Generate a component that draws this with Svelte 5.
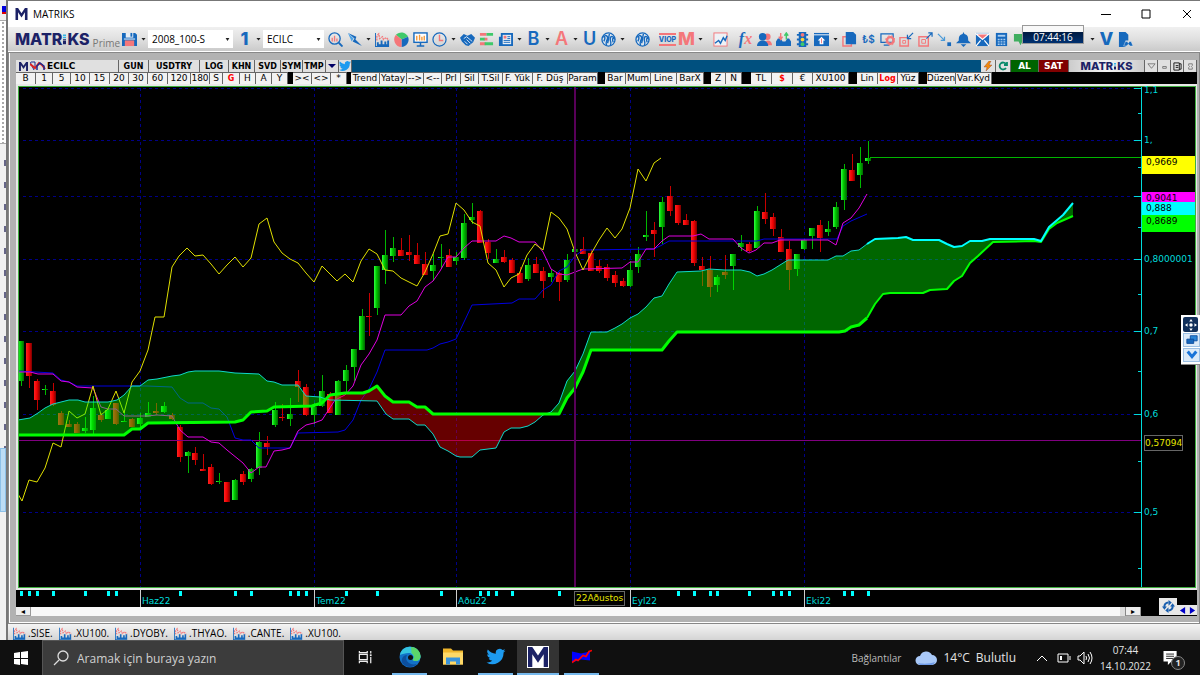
<script lang="ts">
   type Tool = { id: string; text?: string; color?: string; caret?: boolean; gap?: boolean };

   const B = "#1769bd";
   const R = "#f4777a";

   const icons: Record<string, string> = {
      save: `<path d="M0 1h14l2 2v12H0z" fill="${B}"/><path d="M4 1h8v5H4z" fill="#e8eef5"/><path d="M9 1h2v4H9z" fill="${B}"/><path d="M3 9h10v6H3z" fill="${R}"/><path d="M2 7h12v1H2z" fill="#fff"/>`,
      lens: `<circle cx="7" cy="7" r="6" fill="none" stroke="${B}" stroke-width="1.400"/><path d="M11.500 11.500l4 4" stroke="${B}" stroke-width="2"/><path d="M4.500 6v4M7 4v6M9.500 7v3" stroke="${R}" stroke-width="1.400"/>`,
      bolt: `<path d="M1 1l9 4-1 3 7 7-10-5 2-3z" fill="${B}"/><path d="M1 1l6 6-2 3z" fill="#4aa3e8"/>`,
      bars: `<path d="M2 9V4l2-2 1 5 3-2 1 3 3-2 3 3" stroke="${R}" fill="none" stroke-width="1.400" stroke-dasharray="2 1"/><path d="M0 1h1v14h14v1H0z" fill="${B}"/><path d="M2 15v-4h2v2h2V9h2v4h2v-3h2v3h1v-4h2v6z" fill="${B}"/>`,
      pie: `<path d="M8 8L2 3a8 8 0 0 1 13 2z" fill="#3fc96a"/><path d="M8 8L15 5a8 8 0 0 1-7 11z" fill="${B}"/><path d="M8 8v8A8 8 0 0 1 2 3z" fill="${R}"/>`,
      board: `<rect x="1" y="1" width="14" height="10" fill="#fff" stroke="${B}" stroke-width="1.500"/><path d="M4 9V4M7 9V3M9.500 9V5M12 9V4" stroke="#f59a3c" stroke-width="1.500"/><path d="M8 11v3M4 15h8" stroke="${B}" stroke-width="1.600"/>`,
      clock: `<circle cx="8" cy="8" r="7" fill="none" stroke="${B}" stroke-width="1.300"/><path d="M8 3v6h4" stroke="${R}" fill="none" stroke-width="1.500"/>`,
      hands: `<path d="M0 6l4-4 4 2 4-2 4 4-2 5-5 4-3-1-4-4z" fill="${B}"/><path d="M4 7l3-2 6 5M5 10l3 3M7 8l4 4" stroke="#dce8f4" fill="none"/>`,
      list: `<path d="M1 1h7v3H1zM5 6h4v3H5zM1 11h6v3H1z" fill="${R}"/><path d="M8 1h7v3H8zM1 6h5v3H1zM6 11h9v3H6z" fill="#3fc96a"/>`,
      news: `<path d="M3 1h13v14H1V5h2z" fill="${B}"/><path d="M5 3h9v10H5z" fill="#e8eef5"/><path d="M6 4h3v3H6z" fill="${R}"/><path d="M10 5h3M10 7h3M6 9h7M6 11h7" stroke="${B}"/>`,
      badge: `<circle cx="8" cy="8" r="7" fill="#dfe7ef" stroke="${B}" stroke-width="1.400"/><path d="M6 14c-2-3 1-5 1-8 0-2-2-3-4-1 2 0 1 3 0 5M10 14c2-3-1-4 0-7 0-3 3-3 4 0-2-1-2 1-1 4M9 2c-1 4-1 7-2 10" stroke="${B}" stroke-width="1.500" fill="none"/>`,
      line: `<rect x="1" y="1" width="14" height="14" fill="#eef2f6" stroke="${R}"/><path d="M2 12l4-3 2 3 3-6 2 3 2-5" stroke="${B}" fill="none" stroke-width="1.500"/>`,
      people: `<circle cx="11" cy="5" r="3.500" fill="${R}"/><path d="M8 14c0-7 8-6 8 0z" fill="${R}"/><circle cx="6" cy="5" r="4" fill="${B}"/><path d="M0 15c0-8 12-8 12 0z" fill="${B}"/>`,
      inbox: `<path d="M0 10l2-3h3l2 3h3l2-3h2l2 3v5H0z" fill="${B}"/><path d="M5 1v6M3 5l2 3 2-3" stroke="${R}" stroke-width="1.500" fill="none"/><path d="M11 8V2M9 4l2-3 2 3" stroke="#3fc96a" stroke-width="1.500" fill="none"/>`,
      light: `<path d="M4 0h8v16H4zM2 2h12v2H2zM2 7h12v2H2zM2 12h12v2H2z" fill="${B}"/><circle cx="8" cy="3" r="2" fill="${R}"/><circle cx="8" cy="8" r="2" fill="#ffd23c"/><circle cx="8" cy="13" r="2" fill="#3fc96a"/>`,
      up: `<path d="M0 1h16v14H0z" fill="${B}"/><path d="M0 3h16" stroke="#fff"/><path d="M8 5l4 4h-2v4H6V9H4z" fill="#fff"/><path d="M8 7v5" stroke="${R}"/>`,
      copy: `<path d="M1 5h9v10H1z" fill="none" stroke="${R}" stroke-width="1.500"/><path d="M4 0h8l3 3v10H4z" fill="${B}"/>`,
      gear: `<path d="M1 2h13v9H1zM4 14h6" fill="none" stroke="${B}" stroke-width="1.300"/><circle cx="11" cy="9" r="3.500" fill="none" stroke="${R}" stroke-width="2.500"/><circle cx="11" cy="9" r="5" fill="none" stroke="${R}" stroke-dasharray="2 2"/>`,
      shrink: `<path d="M1 6h9v9H1z" fill="none" stroke="${R}" stroke-width="1.500"/><path d="M4 9h3v3H4z" fill="none" stroke="${R}"/><path d="M15 1l-5 5M9 3v4h4" stroke="${B}" fill="none" stroke-width="1.300"/>`,
      grow: `<path d="M1 5h10v10H1z" fill="none" stroke="${R}" stroke-width="1.500"/><path d="M4 8h4v4H4z" fill="none" stroke="${R}"/><path d="M9 7l6-6M11 1h4v4" stroke="${B}" fill="none" stroke-width="1.300"/>`,
      down: `<path d="M1 2l7 7M8 5v4H4" stroke="#4a9ad8" fill="none" stroke-width="1.300"/><path d="M11 11h4v4h-4z" fill="${B}"/>`,
      bell: `<path d="M8 0l1 2c4 1 4 4 4 7l3 3H0l3-3c0-3 0-6 4-7zM5 13h6l-3 3z" fill="${B}"/>`,
      mail: `<path d="M1 1h14v14H1z" fill="${B}"/><path d="M1 2l7 6 7-6zM1 15l5-6M15 15l-5-6" fill="${R}" stroke="#fff" stroke-width="1.300"/>`,
      calc: `<path d="M2 1h12v14H2z" fill="${B}"/><path d="M4 3h8v2H4z" fill="#a9cdf0"/><path d="M4 8h8M4 10.500h8M4 13h8" stroke="#a9cdf0" stroke-width="1.500" stroke-dasharray="2 1"/>`,
      chat: `<path d="M1 2h12v8h-3l-2 4-2-4H1z" fill="#3fae5f"/>`,
      find: `<path d="M1 0h7l3 3v6H8v7H1z" fill="${B}"/><path d="M6 15l2-5h2l1 2 1-2h2l2 5h-3l-2-2-2 2z" fill="${B}" stroke="#e8eef5" stroke-width=".5"/>`,
   };

   const tools: Tool[] = [
      { id: "lens" },
      { id: "bolt", caret: true },
      { id: "bars" },
      { id: "pie" },
      { id: "board" },
      { id: "clock", caret: true },
      { id: "hands" },
      { id: "list" },
      { id: "news", caret: true },
      { id: "bold", text: "B", color: B, caret: true },
      { id: "alpha", text: "A", color: R, caret: true },
      { id: "under", text: "U", color: B },
      { id: "badge", caret: true },
      { id: "badge", gap: true },
      { id: "viop", text: "VIOP", gap: true },
      { id: "mm", text: "M", color: R, caret: true },
      { id: "line", gap: true },
      { id: "fx", text: "fx", gap: true },
      { id: "people" },
      { id: "inbox" },
      { id: "light" },
      { id: "up", caret: true },
      { id: "copy" },
      { id: "lira", text: "₺$" },
      { id: "gear" },
      { id: "shrink" },
      { id: "grow" },
      { id: "down" },
      { id: "bell" },
      { id: "mail" },
      { id: "calc" },
      { id: "chat" },
   ];

   const heads: [string, number][] = [
      ["GUN", 30], ["USDTRY", 51], ["LOG", 29], ["KHN", 26], ["SVD", 26], ["SYM", 22], ["TMP", 23],
   ];

   // label and cell width, an empty label is a black spacer
   const cells: [string, number][] = [
      ["B", 20], ["1", 17], ["5", 18], ["10", 19], ["15", 20], ["20", 19], ["30", 19], ["60", 20],
      ["120", 23], ["180", 19], ["S", 13], ["G", 17], ["H", 16], ["A", 16], ["Y", 16], ["", 5],
      ["><", 19], ["<>", 19], ["*", 16], ["", 4], ["Trend", 29], ["Yatay", 27], ["-->", 17],
      ["<--", 18], ["Prl", 19], ["Sil", 18], ["T.Sil", 24], ["F. Yük", 30], ["F. Düş", 35],
      ["Param", 30], ["", 7], ["Bar", 21], ["Mum", 25], ["Line", 26], ["BarX", 27], ["", 7],
      ["Z", 15], ["N", 16], ["", 9], ["TL", 21], ["$", 21], ["€", 20], ["XU100", 36], ["", 8],
      ["Lin", 21], ["Log", 20], ["Yüz", 21], ["", 8], ["Düzen", 29], ["Var.Kyd", 36],
   ];
   const reds = ["G", "$", "Log"];

   const barX = (i: number) => 21.4 + i * 7.91;

   // body top, body bottom, high, low, r = falling
   const candles = `341 381 341 386 g|343 376 343 388 r|381 400 379 410 r|389 390 385 395 g|391 405 383 406 r
413 425 411 425 r|424 427 420 427 r|424 433 422 433 r|428 431 417 433 g|408 430 396 434 g
415 420 413 422 r|410 419 409 419 g|403 424 403 425 r|421 422 410 422 g|419 427 418 427 r
418 424 413 427 g|413 417 402 417 g|411 413 403 415 r|406 412 402 413 g|415 419 413 420 r
427 457 425 462 r|452 456 451 473 g|453 460 447 465 r|469 471 454 471 r|467 484 464 485 r
481 482 473 484 g|482 502 482 502 r|480 500 479 500 g|474 482 471 485 r|469 479 468 482 g
442 468 432 475 g|443 447 436 455 r|410 425 402 427 g|417 418 404 421 r|414 419 398 426 g
381 387 370 402 r|387 415 384 416 r|407 415 403 424 g|391 406 375 407 g|394 413 392 413 r
381 415 380 415 g|370 381 365 393 g|349 367 349 381 g|316 350 309 350 g|316 317 293 336 r
266 308 266 315 g|255 270 230 284 g|248 256 237 262 g|250 256 238 256 r|252 255 235 261 r
255 264 243 264 r|264 275 252 275 r|265 271 254 281 g|257 258 244 269 g|255 267 249 267 r
257 261 252 265 g|223 258 214 260 g|217 220 203 224 g|211 243 210 243 r|242 253 239 259 r
259 263 249 263 g|257 262 250 263 r|260 273 258 273 r|273 283 267 283 r|265 279 258 281 g
264 273 257 273 r|271 281 267 298 r|273 277 269 282 g|273 282 272 301 r|260 280 254 282 g
249 252 244 255 g|249 254 237 254 r|253 271 249 271 r|266 271 260 273 r|267 278 264 281 r
275 283 271 287 r|281 286 278 287 r|270 286 261 287 g|254 267 247 273 g|235 237 211 241 g
230 234 222 257 r|202 227 197 244 g|196 211 186 216 r|205 223 205 225 r|220 225 214 225 r
221 263 220 266 r|266 270 257 286 r|270 287 256 297 r|277 285 275 292 g|272 275 255 279 r
254 266 254 290 g|243 247 235 251 g|244 251 242 252 r|211 248 206 248 g|212 219 193 224 r
217 229 213 236 r|237 252 229 252 r|249 270 241 290 r|254 269 254 276 g|240 249 239 250 g
228 236 228 249 g|225 238 220 252 r|229 232 221 236 g|207 227 202 229 g|169 200 164 210 g
170 181 154 181 r|163 175 147 188 g|158 161 141 164 g`
      .split(/[|\n]/)
      .map((row, i) => {
         const [top, bottom, high, low, kind] = row.trim().split(" ");
         return { x: Math.round(barX(i)), top: +top, bottom: +bottom, high: +high, low: +low, kind };
      });

   // leading spans, cut where they cross
   const spanA = [
      "18,420 30,418 38,413 45,408 53,404 69,400 78,400 85,402 108,402 117,400 124,395 132,386 140,386 148,380 157,379 172,376 180,375 188,372 195,371 219,371 235,373 259,374 267,381 274,382 282,385 298,385 306,396 320,397 326,399",
      "326,399 330,400 377,401 386,414 393,419 409,419 417,425 425,425 433,434 440,447 448,451 456,456 460,457 472,457 480,450 496,448 504,432 511,428 520,428 528,426 535,422 543,415",
      "543,415 551,412 559,403 567,381 575,371 583,354 591,332 607,332 615,328 622,324 630,318 638,314 646,307 654,298 662,296 669,284 677,272 701,271 709,269 725,270 741,270 750,272 757,276 764,274 772,270 780,265 788,260 828,260 836,256 843,256 851,251 859,250 867,244",
      "867,244 875,239 898,238 906,237 913,240 939,240 947,244 954,247 962,246 970,241 982,241 990,239 1034,239 1041,241 1049,227 1063,215 1073,203",
   ];
   const spanB = [
      "18,435 124,435 132,429 140,429 148,423 235,422 243,420 251,412 267,411 274,407 312,406 322,403 326,399",
      "326,399 330,395 345,393 363,393 369,391 377,386 385,396 393,402 409,402 417,407 425,407 433,414 543,414",
      "543,414 559,414 567,398 575,388 583,372 591,350 662,350 669,341 677,332 839,332 845,331 851,327 859,325 867,318",
      "867,318 875,304 883,294 890,293 923,293 930,290 947,289 954,281 962,276 970,263 978,256 993,242 1034,241 1041,242 1049,229 1057,223 1073,216",
   ];
   const cloud = (k: number) => spanA[k] + " " + spanB[k].split(" ").reverse().join(" ");

   const tenkan =
      "18,372 30,372 38,374 53,374 61,381 69,382 77,387 93,388 101,407 108,409 116,409 124,416 147,416 157,415 172,416 180,430 188,437 203,437 211,442 219,443 227,450 243,463 251,473 259,467 266,467 274,451 282,450 290,448 298,431 306,425 314,423 322,420 335,400 345,395 353,386 361,365 369,354 377,340 385,315 401,315 409,306 417,301 425,287 433,281 440,271 448,257 456,257 464,248 472,241 496,241 504,236 511,238 519,242 535,242 543,252 551,269 559,274 567,275 575,272 583,269 622,268 630,262 638,262 646,249 654,249 662,241 669,236 693,236 701,234 709,239 733,239 741,248 749,253 756,250 764,243 772,243 780,240 828,240 836,245 843,223 851,218 859,208 867,194";
   const kijun =
      "18,371 53,373 61,380 69,382 77,386 147,386 172,387 180,398 188,403 203,403 211,408 219,409 227,417 235,438 243,440 251,440 259,448 290,448 298,433 338,432 345,430 353,420 361,400 369,389 377,372 385,350 427,350 433,348 440,344 448,342 456,339 464,322 472,305 512,303 519,299 535,299 543,290 551,285 559,271 567,267 575,256 583,250 654,249 662,245 669,241 757,241 764,239 837,239 843,226 851,221 867,214";
   const chikou =
      "18,494 22,501 29,480 37,482 45,468 53,443 61,447 69,411 77,418 85,414 93,386 101,415 108,409 116,391 124,413 132,382 140,371 148,350 155,317 164,317 172,267 179,256 187,248 195,256 203,255 211,264 219,274 227,265 235,257 243,267 251,258 259,224 267,218 274,242 282,253 290,259 298,263 306,273 314,282 322,266 337,281 345,274 353,282 361,261 369,249 377,254 385,270 393,271 401,278 417,286 425,272 433,254 440,236 448,234 456,203 464,210 472,222 480,226 488,263 496,270 504,287 511,278 519,274 527,255 535,244 543,250 551,212 559,218 567,229 575,252 583,270 591,254 599,240 607,228 615,238 622,229 630,208 638,169 646,181 654,163 661,158";

   const gridY = [88, 140, 196, 259, 331, 414, 512];
   const minorY = [113, 167, 227, 294, 371, 461, 568];
   const scale: [string, number][] = [
      ["1,1", 90], ["1,", 140], ["0,8000001", 259], ["0,7", 331], ["0,6", 414], ["0,5", 512],
   ];
   const tags = [
      { v: "0,9669", y: 156, h: 18, c: "yellow" },
      { v: "0,9041", y: 192, h: 18, c: "magenta" },
      { v: "0,888", y: 202, h: 18, c: "cyan" },
      { v: "0,8689", y: 215, h: 17, c: "lime" },
   ];
   const pctY = (y: number) => ((y - 87) / 500) * 100;

   const months: [string, number][] = [["Haz22", 140], ["Tem22", 314], ["Aðu22", 456], ["Eyl22", 630], ["Eki22", 804]];
   const marks = [0, 1, 2, 4, 8, 11, 12, 20, 27, 29, 34, 35, 36, 41, 45, 53, 58, 59, 60, 62, 68, 83, 85, 87, 88, 92, 95, 96, 97, 104, 105, 107];
   const pctX = (x: number) => ((x - 16) / 1125) * 100;

   const tabs = [".SISE.", ".XU100.", ".DYOBY.", ".THYAO.", ".CANTE.", ".XU100."];

   let layout = $state("2008_100-S");
   let symbol = $state("ECILC");
   let query = $state("");
</script>

{#snippet logo()}
   <span class="logo">MATR<svg viewBox="0 0 4 14"><path d="M0 1h4v2H0zM0 4h4v2H0z" fill="#35b6e6" /><path d="M0 7h4v1H0zM0 9h4v5H0z" fill="#1c2266" /></svg>KS</span>
{/snippet}

{#snippet bigM()}
   <svg class="big-m" viewBox="0 0 14 14"><path d="M0 14V0h3l4 6 4-6h3v14h-3V5l-4 6-4-6v9z" fill="#1c2266" /></svg>
{/snippet}

{#snippet bird()}
   <svg viewBox="0 0 24 24"><path d="M24 4.600a10 10 0 0 1-2.800.8 5 5 0 0 0 2.100-2.700 10 10 0 0 1-3.100 1.200 4.900 4.900 0 0 0-8.400 4.500A14 14 0 0 1 1.700 3.200a4.900 4.900 0 0 0 1.500 6.500 5 5 0 0 1-2.200-.6 4.900 4.900 0 0 0 3.900 4.900 5 5 0 0 1-2.200.1 4.900 4.900 0 0 0 4.600 3.400A10 10 0 0 1 0 19.500a14 14 0 0 0 21.500-12.400A10 10 0 0 0 24 4.600z" fill="#1d9bf0" /></svg>
{/snippet}

<div class="screen">
   <div class="desk">
      <aside class="behind">
         <span class="flag"></span>
         <span class="dots"></span>
         <span class="bits"></span>
         <span class="picked"></span>
      </aside>

      <div class="app">
         <header class="title">
            {@render bigM()}
            <h1>MATRIKS</h1>
            <div class="win">
               <button aria-label="Minimize"><svg viewBox="0 0 10 10"><path d="M0 5.500h10" /></svg></button>
               <button aria-label="Maximize"><svg viewBox="0 0 10 10"><path d="M1 1h8v8H1z" /></svg></button>
               <button aria-label="Close"><svg viewBox="0 0 10 10"><path d="M1 1l8 8M9 1L1 9" /></svg></button>
            </div>
         </header>

         <nav class="toolbar">
            <div class="brand">{@render logo()}<small>Prime</small></div>
            <button class="tool" aria-label="save"><svg viewBox="0 0 16 16">{@html icons.save}</svg></button>
            <span class="caret"></span>
            <label class="pick">
               <select bind:value={layout} aria-label="Layout"><option>2008_100-S</option></select>
               <span class="caret"></span>
            </label>
            <button class="tool letter one">1</button>
            <span class="caret"></span>
            <label class="pick short">
               <select bind:value={symbol} aria-label="Symbol"><option>ECILC</option></select>
               <span class="caret"></span>
            </label>
            {#each tools as t}
               <button class="tool {t.id}" class:letter={t.text} class:gap={t.gap} aria-label={t.id}>
                  {#if t.id === "fx"}<i>f</i><i class="pink">x</i>
                  {:else if t.text}<span style:color={t.color}>{t.text}</span>
                  {:else}<svg viewBox="0 0 16 16">{@html icons[t.id]}</svg>{/if}
               </button>
               {#if t.caret}<span class="caret"></span>{/if}
            {/each}
            <div class="ticker"><time>07:44:16</time></div>
            <span class="caret"></span>
            <button class="tool letter vee">V</button>
            <button class="tool" aria-label="find"><svg viewBox="0 0 16 16">{@html icons.find}</svg></button>
         </nav>

         <main class="mdi">
            <section class="child">
               <div class="heads">
                  <div class="chip">{@render bigM()}</div>
                  <div class="chip name">
                     <svg viewBox="0 0 16 10"><path d="M0 1l4 8M1 1h4v5" stroke="#1c2a90" fill="none" /><path d="M0 3l5 4 4-5 3 2 3 4" stroke="#d22" fill="none" stroke-width="2" /><path d="M7 9V5l3-3 4 3v4" stroke="#1c2a90" fill="none" stroke-width="1.500" /></svg>
                     ECILC
                  </div>
                  {#each heads as [label, w]}<button style:width="{w}px">{label}</button>{/each}
                  <button class="drop" aria-label="More"><i></i></button>
                  <button class="tweet" aria-label="Twitter">{@render bird()}</button>
                  <span class="fill"></span>
                  <button class="sq" aria-label="Fast order"><svg viewBox="0 0 10 10"><path d="M6 0L1 6h3L3 10l6-6H6l2-4z" fill="#f08a10" stroke="#843" stroke-width=".4" /></svg></button>
                  <button class="sq" aria-label="Reload"><svg viewBox="0 0 10 10"><path d="M8 3a3.500 3.500 0 1 0 0 4M9 1v3H6" fill="none" stroke="#0a8a6a" stroke-width="1.800" /></svg></button>
                  <button class="buy">AL</button>
                  <button class="sell">SAT</button>
                  <div class="maker">{@render logo()}</div>
                  <button class="ctl" aria-label="Menu"><svg viewBox="0 0 10 10"><path d="M1 2h8L5 7z" /></svg></button>
                  <button class="ctl" aria-label="Minimize chart"><svg viewBox="0 0 10 10"><path d="M3 5h4v2H3z" /></svg></button>
                  <button class="ctl dark" aria-label="Restore chart"><svg viewBox="0 0 10 10"><path d="M1 1h6v8H1zM3 4h3M3 6h3M7 2h2v6H7" /></svg></button>
                  <button class="ctl" aria-label="Close chart"><svg viewBox="0 0 10 10"><path d="M3 2h4v2l-1 1 1 1v2H3V6l1-1-1-1z" /></svg></button>
               </div>
               <div class="cells">
                  {#each cells as [label, w]}
                     {#if label}<button class:red={reds.includes(label)} style:width="{w}px">{label}</button>
                     {:else}<span style:width="{w}px"></span>{/if}
                  {/each}
               </div>

               <div class="chart">
                  <svg class="plot" viewBox="19 87 1122 500" preserveAspectRatio="none">
                     <defs>
                        <linearGradient id="up"><stop offset="0" stop-color="#3f4" /><stop offset=".4" stop-color="#0c0" /><stop offset="1" stop-color="#060" /></linearGradient>
                        <linearGradient id="dn"><stop offset="0" stop-color="#f22" /><stop offset=".5" stop-color="#e00" /><stop offset="1" stop-color="#700" /></linearGradient>
                     </defs>
                     <g class="grid">
                        {#each gridY as y}<path d="M23 {y}.5H1134" />{/each}
                        {#each months as [, x]}<path d="M{x}.5 88V587" />{/each}
                     </g>
                     <g class="candles">
                        {#each candles as c}
                           <rect class={c.kind} x={c.x} y={c.high} width="1" height={c.low - c.high} />
                           <rect x={c.x - 3} y={c.top} width="6" height={c.bottom - c.top} fill="url(#{c.kind === 'g' ? 'up' : 'dn'})" />
                        {/each}
                     </g>
                     <path d="M870 157.500H1141" stroke="#00b400" stroke-width="1" />
                     <path class="cross-y" d="M19 440.500H1141" />
                     <polyline points={kijun} stroke="#0000e0" />
                     <polyline points={tenkan} stroke="#e000e0" />
                     <polyline points={chikou} stroke="#e0e000" />
                     <polygon points={cloud(0)} fill="#0f0" fill-opacity=".4" />
                     <polygon points={cloud(1)} fill="#f00" fill-opacity=".4" />
                     <polygon points={cloud(2)} fill="#0f0" fill-opacity=".4" />
                     <polygon points={cloud(3)} fill="#0f0" fill-opacity=".4" />
                     <polyline points={spanA.slice(0, 3).join(" ")} stroke="#10d8c8" />
                     <polyline points={spanB.slice(0, 3).join(" ")} stroke="#0f0" class="thick" />
                     <polyline points={spanB[3]} stroke="#0f0" class="ahead" />
                     <polyline points={spanA[3]} stroke="#0ff" class="ahead" />
                     <path class="cross-x" d="M575 87V587" />
                  </svg>

                  <div class="scale">
                     <svg viewBox="1134 87 61 500" preserveAspectRatio="none">
                        <path d="M1141.500 87V587" />
                        {#each gridY as y}<path d="M1134 {y}.5h7" />{/each}
                        {#each minorY as y}<path d="M1138 {y}.5h3" />{/each}
                     </svg>
                     {#each scale as [label, y]}<span class="mark" style:top="{pctY(y)}%">{label}</span>{/each}
                     {#each tags as t}
                        <span class="tag" style:top="{pctY(t.y)}%" style:height="{t.h}px" style:background={t.c}>{t.v}</span>
                     {/each}
                     <span class="mark here" style:top="{pctY(443)}%">0,57094</span>
                  </div>
               </div>

               <div class="foot">
                  <div class="times">
                     {#each marks as i}<i style:left="{pctX(barX(i))}%"></i>{/each}
                     {#each months as [label, x]}<span class="month" style:left="{pctX(x)}%">{label}</span>{/each}
                     <span class="date" style:left="{pctX(574)}%">22Aðustos</span>
                  </div>
                  <div class="scroll">
                     <button class="left" aria-label="Scroll left">◂</button>
                     <span class="thumb"></span>
                     <button aria-label="Scroll right">▸</button>
                  </div>
                  <div class="corner">
                     <button class="sync" aria-label="Refresh"><svg viewBox="0 0 16 16"><path d="M3 9a5 5 0 0 1 5-6M13 7a5 5 0 0 1-5 6" fill="none" stroke="#1a5fae" stroke-width="2.500" /><path d="M8 0l4 3-4 4zM8 16l-4-3 4-4zM0 8h6l-3 4zM16 8h-6l3-4z" fill="#1a5fae" /></svg></button>
                     <button class="nav" aria-label="Previous"><svg viewBox="0 0 8 8"><path d="M7 0v8L1 4z" /></svg></button>
                     <button class="nav" aria-label="Next"><svg viewBox="0 0 8 8"><path d="M1 0v8l6-4z" /></svg></button>
                  </div>
               </div>
            </section>
         </main>

         <nav class="tabs">
            {#each tabs as tab}
               <a href="#{tab}"><svg viewBox="0 0 16 16">{@html icons.bars}</svg>{tab}</a>
            {/each}
         </nav>

         <div class="dock">
            <button class="pad" aria-label="Move"><svg viewBox="0 0 14 14"><circle cx="7" cy="7" r="2" fill="#fff" /><path d="M7 0l2 3H5zM7 14l2-3H5zM0 7l3-2v4zM14 7l-3-2v4z" fill="#fff" /></svg></button>
            <button aria-label="Windows"><svg viewBox="0 0 14 14"><path d="M5 2h8v6H5z" fill="#2a86d8" stroke="#0a4a9c" /><path d="M1 6h8v5H1z" fill="#1667bd" stroke="#0a4a9c" /></svg></button>
            <button aria-label="Collapse"><svg viewBox="0 0 14 14"><path d="M2 3l5 6 5-6" fill="none" stroke="#1a74d8" stroke-width="3.500" /></svg></button>
         </div>
      </div>
   </div>

   <footer class="taskbar">
      <button class="start" aria-label="Start"><svg viewBox="0 0 14 14"><path d="M0 2l6-1v6H0zM7 1l7-1v7H7zM0 8h6v6l-6-1zM7 8h7v6l-7-1z" fill="#fff" /></svg></button>
      <label class="search">
         <svg viewBox="0 0 16 16"><circle cx="10" cy="6" r="5" /><path d="M6 10l-5 5" /></svg>
         <input bind:value={query} placeholder="Aramak için buraya yazın" aria-label="Search" />
      </label>
      <button class="task first" aria-label="Task view"><svg viewBox="0 0 16 16"><path d="M1 1v2h9V1M1 15v-2h9v2M1 5h9v6H1zM14 1v3M14 8v7" fill="none" stroke="#eee" stroke-width="1.400" /><path d="M13 5h2v2h-2z" fill="#eee" /></svg></button>
      <button class="task edge open" aria-label="Edge">
         <svg viewBox="0 0 22 22">
            <circle cx="11" cy="11" r="10.500" fill="#1272c8" />
            <path d="M1 9C3-2 19-2 21.500 10c.3 5-5 6-8 4 3-3 0-7-4-7-3 0-6 1-8.500 2z" fill="#35c4e0" />
            <path d="M12 1c6 0 10 5 9.500 10-.5 4-5 5-8 3 3-3 1-5-1-7z" fill="#5bd66a" />
            <path d="M8 9c-3 5 2 11 10 9-4 4-10 4-14 0-3-4 0-9 4-9z" fill="#0c4f9e" />
            <circle cx="11.500" cy="11.500" r="2.500" fill="#101010" />
         </svg>
      </button>
      <button class="task" aria-label="Explorer"><svg viewBox="0 0 20 18"><path d="M0 1h8l2 2h10v14H0z" fill="#f0b62c" /><path d="M0 5h20v12H0z" fill="#ffd968" /><path d="M3 17v-7h14v7h-4v-3H7v3z" fill="#3a93dc" /></svg></button>
      <button class="task open" aria-label="Twitter">{@render bird()}</button>
      <button class="task open active" aria-label="Matriks"><span>{@render bigM()}</span></button>
      <button class="task open" aria-label="Matriks chart"><svg viewBox="0 0 20 16"><path d="M0 3l9 2 9-2v9l-9-1-9 3z" fill="#00f" /><path d="M0 14l4-3 2 1 5-5 3 1 3-5 3-1" stroke="#f00" stroke-width="1.600" fill="none" /></svg></button>

      <div class="tray">
         <a class="links" href="#links">Bağlantılar</a>
         <a class="weather" href="#weather">
            <svg viewBox="0 0 22 16"><path d="M5 15a4.500 4.500 0 0 1 0-9 6.500 6.500 0 0 1 12-1 5 5 0 0 1 0 10z" fill="#a9c9f8" /><path d="M3 13c4 1 12 1 17-1a5 5 0 0 1-3 3H5z" fill="#6f9be8" /></svg>
            <span>14°C</span><span>Bulutlu</span>
         </a>
         <svg class="chev" viewBox="0 0 12 8"><path d="M1 7l5-5 5 5" /></svg>
         <svg class="batt" viewBox="0 0 14 10"><path d="M1 1h10v8H1zM13 3v4" /><path d="M3 3h2v4H3z" fill="#fff" stroke="none" /></svg>
         <svg class="vol" viewBox="0 0 16 14"><path d="M1 5h2l4-4v12L3 9H1zM9 5q1 2 0 4M11 3q3 4 0 8M13 1q4 6 0 12" /></svg>
         <div class="when"><time>07:44</time><time>14.10.2022</time></div>
         <button class="note" aria-label="Notifications">
            <svg viewBox="0 0 16 16"><path d="M0 0h15v12H9l-4 4v-4H0z" fill="#fff" /><path d="M3 3.500h9M3 6h9M3 8.500h9" stroke="#111" /></svg>
            <b>1</b>
         </button>
      </div>
   </footer>
</div>

<style>
   :global(body) {
      background: #101010;
      overflow: hidden;
   }
   .screen {
      display: flex;
      flex-direction: column;
      height: 100vh;
      font-family: "Open Sans", "Noto Sans", sans-serif;
      font-size: 10px;
      color: #000;
   }
   .screen :is(button, input, select) {
      box-sizing: border-box;
      margin: 0;
      padding: 0;
      border: 0;
      border-radius: 0;
      background: none;
      font: inherit;
      color: inherit;
   }
   svg {
      display: block;
   }
   a {
      color: inherit;
      text-decoration: none;
   }
   .desk {
      flex: 1;
      min-height: 0;
      display: flex;
   }

   /* sliver of the window behind */
   .behind {
      flex: 0 0 6px;
      display: flex;
      flex-direction: column;
      background: #f0f0f0;
   }
   .flag {
      height: 8px;
      margin: 6px 0 6px 2px;
      background: linear-gradient(#00d 70%, #d00 70%);
   }
   .dots {
      height: 122px;
      border-top: 1px solid #aaa;
      border-bottom: 1px solid #aaa;
      background: radial-gradient(circle at 3px 2px, #aaa 1px, #fff 1px) 0 0 / 6px 4px;
   }
   .bits {
      height: 304px;
      margin-left: 4px;
      background: repeating-linear-gradient(#f0f0f0 0 16px, #668 16px 22px);
   }
   .picked {
      height: 62px;
      background: #bcdcf4;
      border: 1px solid #8cc0e8;
   }

   .app {
      position: relative;
      flex: 1;
      min-width: 0;
      display: flex;
      flex-direction: column;
      border-left: 2px solid #777;
      background: #fff;
   }
   .title {
      display: flex;
      align-items: center;
      height: 26px;
      padding-left: 7px;
      border-top: 1px solid #777;
   }
   .title h1 {
      margin: 0 0 0 5px;
      font-size: 10px;
      font-weight: 400;
   }
   .big-m {
      width: 13px;
      height: 12px;
   }
   .win {
      display: flex;
      margin-left: auto;
   }
   .win button {
      display: grid;
      place-items: center;
      width: 40px;
   }
   .win button:last-child {
      width: 26px;
      margin-left: 8px;
   }
   .win svg {
      width: 10px;
      height: 10px;
      fill: none;
      stroke: #000;
   }

   .toolbar {
      display: flex;
      align-items: center;
      height: 24px;
      padding-left: 7px;
      background: linear-gradient(#f0f0f0, #e0e0e0 50%, #cacaca);
   }
   .brand {
      display: flex;
      align-items: flex-end;
      width: 105px;
   }
   .brand small {
      margin-left: 3px;
      color: #777;
      font-size: 10px;
      line-height: 10px;
   }
   .logo {
      display: inline-flex;
      align-items: center;
      color: #1c2266;
      font-family: Inter, sans-serif;
      font-weight: 800;
      font-size: 16px;
      line-height: 18px;
   }
   .logo svg {
      width: 3px;
      height: 12px;
      margin: 0 1px;
   }
   .tool {
      display: grid;
      grid-auto-flow: column;
      place-content: center;
      flex: 0 0 19px;
      height: 20px;
   }
   .tool svg {
      width: 15px;
      height: 15px;
   }
   .screen .tool.gap {
      margin-left: 6px;
   }
   .screen .tool.letter {
      font-family: Inter, sans-serif;
      font-size: 18px;
      font-weight: 600;
      line-height: 20px;
   }
   .screen .tool.one,
   .screen .tool.vee {
      color: #1769bd;
      font-weight: 800;
   }
   .screen .tool.mm {
      font-weight: 800;
   }
   .screen .tool.viop {
      color: #1769bd;
      font-size: 7px;
      font-weight: 800;
      line-height: 9px;
   }
   .tool.viop span {
      border-top: 2px solid #f4777a;
      border-bottom: 2px solid #f4777a;
   }
   .screen .tool.fx {
      color: #1769bd;
      font-family: "Liberation Serif", serif;
      font-size: 16px;
   }
   .pink {
      color: #f4777a;
   }
   .screen .tool.lira {
      color: #1769bd;
      font-size: 10px;
   }
   .caret {
      flex: 0 0 9px;
      height: 3px;
      background: #222;
      clip-path: polygon(2px 0, 7px 0, 50% 100%);
   }
   .pick {
      display: flex;
      align-items: center;
      width: 85px;
      height: 18px;
      margin-right: 2px;
      background: #fff;
   }
   .pick.short {
      width: 61px;
   }
   .screen .pick select {
      flex: 1;
      min-width: 0;
      appearance: none;
      padding-left: 4px;
   }
   .pick .caret {
      height: 16px;
      margin: 0 1px;
      background: linear-gradient(#222, #222) center / 5px 3px no-repeat;
      clip-path: polygon(2px 6px, 7px 6px, 50% 10px);
   }
   .ticker {
      z-index: 1;
      align-self: flex-start;
      width: 62px;
      height: 19px;
      box-sizing: border-box;
      margin: -2px 4px 0 -8px;
      padding-top: 6px;
      border: 1px solid #999;
      background: linear-gradient(#f8f8f8 6px, #001a40 6px, #003070);
      color: #fff;
      font-size: 10px;
      line-height: 11px;
      text-align: center;
   }

   .mdi {
      flex: 1;
      min-height: 0;
      display: flex;
      padding: 7px 3px 6px 6px;
      border: solid #fff;
      border-width: 1px 0 2px 2px;
      outline: 1px solid #888;
      outline-offset: -1px;
      background: #b2b2b2;
      margin-top: 1px;
   }
   .child {
      flex: 1;
      min-width: 0;
      display: flex;
      flex-direction: column;
      background: #e8e8e8;
      font-family: "DejaVu Sans", sans-serif;
      font-size: 9px;
      line-height: 11px;
   }
   .heads {
      display: flex;
      height: 12px;
      background: #00507f;
      font-size: 8px;
      font-weight: 700;
   }
   .screen .heads > :not(.fill) {
      flex-shrink: 0;
      box-sizing: border-box;
      border-right: 1px solid #666;
      background: #e0e0e0;
      white-space: nowrap;
      overflow: hidden;
   }
   .screen .heads .chip {
      display: flex;
      align-items: center;
      justify-content: center;
      width: 14px;
      border-right: 0;
   }
   .heads .chip .big-m {
      width: 9px;
      height: 9px;
   }
   .screen .heads .name {
      justify-content: flex-start;
      gap: 1px;
      width: 89px;
      border-right: 1px solid #666;
      font-size: 9px;
   }
   .name svg {
      width: 16px;
      height: 10px;
   }
   .heads .drop {
      width: 13px;
   }
   .drop i {
      display: block;
      width: 8px;
      height: 4px;
      margin: auto;
      background: #006;
      clip-path: polygon(0 0, 100% 0, 50% 100%);
   }
   .heads .tweet {
      width: 13px;
   }
   .tweet svg {
      width: 12px;
      height: 12px;
   }
   .fill {
      flex: 1;
   }
   .heads .sq {
      display: grid;
      place-items: center;
      width: 15px;
   }
   .sq svg {
      width: 10px;
      height: 10px;
   }
   .screen .heads > .buy,
   .screen .heads > .sell {
      width: 28px;
      background: #006400;
      color: #fff;
      font-size: 9px;
   }
   .screen .heads > .sell {
      width: 30px;
      background: #800000;
   }
   .screen .heads > .maker {
      display: grid;
      place-items: center;
      width: 76px;
      background: linear-gradient(90deg, #ccc, #f4f4f4 50%, #ccc);
   }
   .maker .logo {
      font-size: 11px;
      line-height: 12px;
   }
   .maker svg {
      width: 2px;
      height: 8px;
   }
   .heads .ctl {
      display: grid;
      place-items: center;
      width: 13px;
   }
   .ctl svg {
      width: 9px;
      height: 9px;
      fill: none;
      stroke: #777;
   }
   .ctl.dark svg {
      stroke: #111;
   }
   .cells {
      display: flex;
      height: 12px;
      background: #000;
   }
   .cells > * {
      flex-shrink: 0;
   }
   .screen .cells button {
      display: flex;
      justify-content: center;
      border: solid #666;
      border-width: 1px 1px 0 0;
      background: #f2f2f2;
      line-height: 11px;
      white-space: nowrap;
      overflow: hidden;
   }
   .screen .cells .red {
      color: #f00;
      font-size: 8px;
      font-weight: 700;
   }

   .chart {
      flex: 1;
      min-height: 0;
      display: flex;
      margin: 2px 1px 2px 2px;
      border: 1px solid #3fae3f;
      background: #000;
   }
   .plot {
      flex: 1;
      min-width: 0;
      height: 100%;
   }
   .plot polyline {
      fill: none;
      stroke-width: 1;
   }
   .plot .thick {
      stroke-width: 3;
      stroke-linejoin: round;
   }
   .plot .ahead {
      stroke-width: 2;
      stroke-linejoin: round;
   }
   .grid path {
      stroke: #000088;
      stroke-dasharray: 3 3;
      shape-rendering: crispEdges;
   }
   .candles {
      shape-rendering: crispEdges;
   }
   .candles .g {
      fill: #00b800;
   }
   .candles .r {
      fill: #c80000;
   }
   .cross-y {
      stroke: #800080;
   }
   .cross-x {
      stroke: #580058;
      stroke-width: 2;
   }
   .scale {
      position: relative;
      flex: 0 0 54px;
      color: #00dcdc;
   }
   .scale svg {
      position: absolute;
      left: -7px;
      width: 61px;
      height: 100%;
      stroke: #00dcdc;
      shape-rendering: crispEdges;
   }
   .mark {
      position: absolute;
      left: 3px;
      transform: translateY(-50%);
   }
   .here {
      padding: 1px 0;
      border: 1px solid #666;
      background: #000;
      color: #e6e600;
      line-height: 12px;
   }
   .tag {
      position: absolute;
      left: 1px;
      right: 0;
      box-sizing: border-box;
      padding: 1px 0 0 4px;
      color: #000;
   }

   .foot {
      display: grid;
      grid-template-columns: 1fr 56px;
      grid-template-rows: 17px 9px;
   }
   .times {
      position: relative;
      overflow: hidden;
      background: #000;
      color: #00dcdc;
   }
   .times i {
      position: absolute;
      top: 1px;
      width: 3px;
      height: 5px;
      margin-left: -1px;
      background: #0ff;
   }
   .month {
      position: absolute;
      top: 0;
      height: 11px;
      padding: 6px 0 0 1px;
      border-left: 1px solid #ccc;
   }
   .date {
      position: absolute;
      top: 1px;
      width: 51px;
      height: 15px;
      overflow: hidden;
      border: 1px solid #666;
      padding-left: 1px;
      box-sizing: border-box;
      background: #000;
      color: #e6e600;
      line-height: 13px;
   }
   .scroll {
      display: flex;
      justify-content: flex-end;
      background: #f8f8f8;
   }
   .screen .scroll button {
      width: 15px;
      border: 1px solid #999;
      border-width: 0 1px 1px 0;
      background: #eee;
      font-size: 8px;
      line-height: 7px;
      overflow: hidden;
   }
   .screen .scroll .left {
      margin-right: auto;
   }
   .thumb {
      width: 5px;
      border-right: 1px solid #888;
      background: #ddd;
   }
   .corner {
      grid-area: 1 / 2 / 3 / 3;
      display: flex;
      align-items: flex-end;
      justify-content: flex-end;
      padding-bottom: 1px;
      background: #000;
   }
   .screen .corner button {
      display: grid;
      place-items: center;
      background: #e8e8e8;
   }
   .corner .sync {
      width: 18px;
      height: 17px;
   }
   .sync svg {
      width: 13px;
      height: 13px;
   }
   .corner .nav {
      width: 10px;
      height: 10px;
   }
   .nav svg {
      width: 7px;
      height: 7px;
      fill: #0000c8;
   }

   .tabs {
      display: flex;
      gap: 6px;
      box-sizing: border-box;
      height: 16px;
      padding: 3px 0 0 5px;
      background: linear-gradient(#f4f4f4, #d4d4d4);
      line-height: 13px;
   }
   .tabs a {
      display: flex;
      gap: 2px;
   }
   .tabs svg {
      width: 13px;
      height: 13px;
   }

   .dock {
      position: absolute;
      top: 315px;
      right: 0;
      display: grid;
      gap: 1px;
      padding: 2px 0 2px 2px;
      border-bottom: 1px solid #888;
      background: #fff;
   }
   .screen .dock button {
      display: grid;
      place-items: center;
      width: 17px;
      height: 14px;
      border: 1px solid #9cc0e4;
      background: #dceaf8;
   }
   .screen .dock .pad {
      width: 15px;
      height: 15px;
      border-radius: 2px;
      border: 0;
      background: #12305a;
   }
   .dock svg {
      width: 12px;
      height: 12px;
   }

   .taskbar {
      display: flex;
      height: 35px;
      background: #101010;
      color: #e4e4e4;
   }
   .taskbar button {
      display: grid;
      place-items: center;
   }
   .taskbar .start {
      width: 42px;
   }
   .start svg {
      width: 14px;
      height: 14px;
   }
   .search {
      display: flex;
      align-items: center;
      gap: 8px;
      width: 302px;
      box-sizing: border-box;
      padding-left: 10px;
      border: 1px solid #555;
      border-bottom: 0;
      background: #3c3c3c;
   }
   .search svg {
      width: 16px;
      height: 16px;
      fill: none;
      stroke: #ddd;
      stroke-width: 1.3;
   }
   .screen .search input {
      flex: 1;
      font-size: 12px;
   }
   .search input::placeholder {
      color: #d0d0d0;
      opacity: 1;
   }
   .screen .task {
      width: 35px;
      margin-right: 8px;
      border-bottom: 2px solid transparent;
   }
   .screen .first {
      margin: 0 9px 0 4px;
   }
   .task svg {
      width: 20px;
      height: 19px;
   }
   .first svg {
      width: 15px;
      height: 14px;
   }
   .edge svg {
      width: 22px;
      height: 22px;
   }
   .screen .open {
      border-bottom-color: #76b9ed;
   }
   .screen .active {
      width: 42px;
      margin: 0 5px 0 -4px;
      background: #333;
   }
   .active span {
      padding: 1px;
      background: #fff;
   }
   .active .big-m {
      width: 20px;
      height: 20px;
   }
   .tray {
      display: flex;
      align-items: center;
      margin-left: auto;
      padding-right: 22px;
   }
   .links {
      margin-right: 14px;
      color: #bbb;
   }
   .weather {
      display: flex;
      align-items: center;
      gap: 6px;
      margin-right: 20px;
      font-size: 12px;
   }
   .weather svg {
      width: 22px;
      height: 16px;
   }
   .tray > svg {
      fill: none;
      stroke: #fff;
   }
   .chev {
      width: 12px;
      height: 8px;
      margin-right: 9px;
   }
   .batt {
      width: 14px;
      height: 10px;
      margin-right: 6px;
   }
   .vol {
      width: 16px;
      height: 14px;
      margin-right: 7px;
   }
   .when {
      display: grid;
      justify-items: center;
      margin-right: 12px;
      line-height: 16px;
   }
   .note {
      position: relative;
   }
   .note svg {
      width: 15px;
      height: 14px;
   }
   .note b {
      position: absolute;
      left: 8px;
      top: 5px;
      width: 12px;
      height: 12px;
      border: 1px solid #888;
      border-radius: 50%;
      background: #222;
      font-size: 9px;
      line-height: 12px;
      text-align: center;
   }
</style>
